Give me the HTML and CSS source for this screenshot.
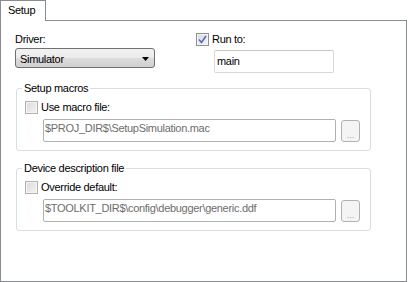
FILE: index.html
```html
<!DOCTYPE html>
<html lang="en">
<head>
    <meta charset="UTF-8">
    <title>Debugger Options - Setup</title>
    <link rel="stylesheet" href="styles.css">
</head>
<body>
<div class="dialog">
    <div class="tabs">
        <div class="tab">Setup</div>
        <div class="tab-fill"></div>
    </div>
    <div class="panel">
        <div class="top-row">
            <div class="driver">
                <div class="label">Driver:</div>
                <div class="combo">
                    <span>Simulator</span>
                    <svg class="combo-arrow" width="7" height="4" viewBox="0 0 7 4"><polygon points="0,0 7,0 3.5,4" fill="#000"/></svg>
                </div>
            </div>
            <div class="run-to">
                <div class="check-row">
                    <span class="check checked">
                        <svg width="9" height="9" viewBox="0 0 9 9"><path d="M1 4.5 L3.5 7.5 L8 1" fill="none" stroke="#4a6cb8" stroke-width="1.5"/></svg>
                    </span>
                    Run to:
                </div>
                <div class="input run-input">main</div>
            </div>
        </div>

        <fieldset class="group">
            <legend>Setup macros</legend>
            <div class="check-row"><span class="check disabled"></span>Use macro file:</div>
            <div class="path-row">
                <div class="input path">$PROJ_DIR$\SetupSimulation.mac</div>
                <div class="browse">...</div>
            </div>
        </fieldset>

        <fieldset class="group second">
            <legend>Device description file</legend>
            <div class="check-row"><span class="check disabled"></span>Override default:</div>
            <div class="path-row">
                <div class="input path">$TOOLKIT_DIR$\config\debugger\generic.ddf</div>
                <div class="browse">...</div>
            </div>
        </fieldset>
    </div>
</div>
</body>
</html>
```

FILE: styles.css
```css
* {
    box-sizing: border-box;
}

body {
    margin: 0;
    font-family: "Liberation Sans", Arial, sans-serif;
    font-size: 11px;
    line-height: 14px;
    letter-spacing: -0.3px;
    color: #000;
    background-color: #fff;
}

.dialog {
    width: 407px;
}

.tabs {
    display: flex;
    height: 21px;
}

.tab {
    width: 46px;
    height: 21px;
    border: 1px solid #898c95;
    border-bottom: none;
    padding: 2px 0 0 7px;
}

.tab-fill {
    flex: 1;
    border-bottom: 1px solid #898c95;
}

.panel {
    height: 261px;
    border: 1px solid #898c95;
    border-top: none;
    padding: 11px 0 0 14px;
}

.top-row {
    display: flex;
    gap: 41px;
}

.driver {
    width: 140px;
}

.combo {
    display: flex;
    align-items: center;
    justify-content: space-between;
    margin-top: 2px;
    height: 20px;
    padding: 1px 5px 0 4px;
    border: 1px solid #707070;
    border-radius: 3px;
    background: linear-gradient(#f2f2f2, #ebebeb 50%, #dddddd 50%, #cfcfcf);
}

.combo-arrow {
    margin-top: 1px;
}

.check-row {
    display: flex;
    align-items: center;
    height: 14px;
}

.check {
    display: flex;
    align-items: center;
    justify-content: center;
    width: 13px;
    height: 13px;
    margin-right: 3px;
    border: 1px solid #8e8f8f;
    background: linear-gradient(135deg, #d6d9de, #f6f6f6);
    box-shadow: inset 0 0 0 1px #f4f4f4;
}

.check.disabled {
    border-color: #b2b2b2;
    background: linear-gradient(135deg, #dcdcdc, #f2f2f2);
}

.input {
    height: 23px;
    border: 1px solid #d5d8dc;
    border-top-color: #c2c5ca;
    border-radius: 2px;
    background-color: #fff;
    white-space: nowrap;
    overflow: hidden;
}

.run-input {
    width: 120px;
    margin: 4px 0 0 18px;
    padding: 3px 0 0 2px;
}

.group {
    width: 355px;
    margin: 8px 0 0 1px;
    padding: 5px 0 8px 8px;
    border: 1px solid #d5dfe5;
    border-radius: 3px;
}

.group.second {
    margin-top: 10px;
}

.group legend {
    margin-left: -3px;
    padding: 0 2px;
}

.path-row {
    display: flex;
    gap: 5px;
    margin: 5px 0 0 18px;
}

.path {
    width: 293px;
    padding: 1px 0 0 1px;
    border-color: #adb2b5;
    color: #6d6d6d;
}

.browse {
    width: 19px;
    height: 22px;
    margin-top: 1px;
    border: 1px solid #adb2b5;
    border-radius: 3px;
    background-color: #f4f4f4;
    color: #9a9a9a;
    font-size: 9px;
    line-height: 9px;
    letter-spacing: 0;
    text-align: center;
    padding-top: 10px;
}
```
